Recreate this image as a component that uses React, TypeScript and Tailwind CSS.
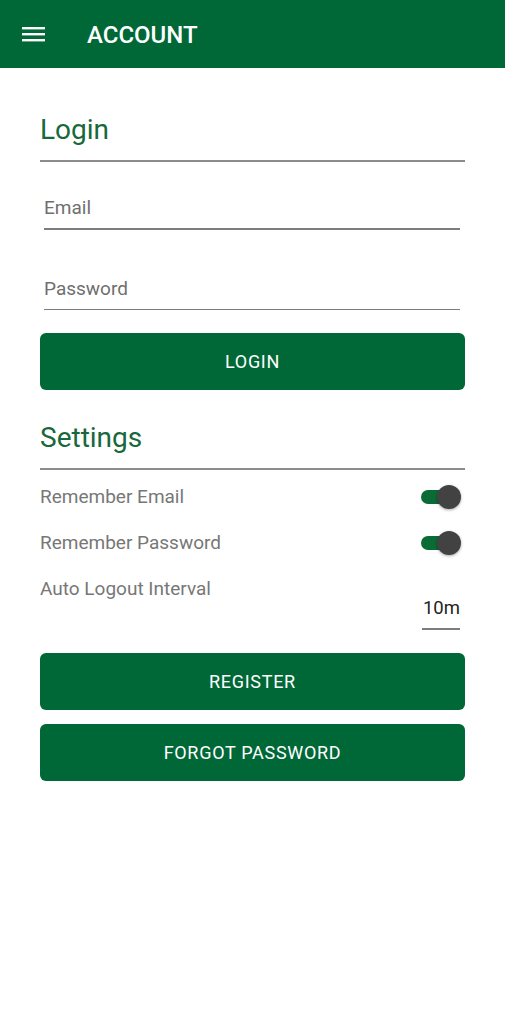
import React from "react";

function Toggle() {
  return (
    <div className="relative w-[40px] h-[24px] mr-[4px]">
      <div className="absolute left-0 top-[5px] w-[28px] h-[14px] rounded-full bg-[#0b6b35]" />
      <div className="absolute right-0 top-0 w-[24px] h-[24px] rounded-full bg-[#424242] shadow-[0_1px_3px_rgba(0,0,0,0.35)]" />
    </div>
  );
}

function Field({ label }: { label: string }) {
  return (
    <div className="ml-[4px] mr-[5px]">
      <div className="text-[19px] leading-[24px] text-[#6f6f6f]">{label}</div>
      <div className="mt-[8px] h-[1.5px] bg-[#7d7d7d]" />
    </div>
  );
}

function Button({ label }: { label: string }) {
  return (
    <button className="w-full h-[57px] rounded-[6px] bg-[#006837] text-white text-[18px] font-normal tracking-[0.7px] flex items-center justify-center">
      {label}
    </button>
  );
}

export default function App() {
  return (
    <div
      className="w-[505px] min-h-[1024px] bg-white"
      style={{ fontFamily: "Roboto, 'Noto Sans', sans-serif" }}
    >
      <header className="h-[68px] bg-[#006837] flex items-center">
        <svg className="ml-[22px]" width="23" height="15" viewBox="0 0 23 15">
          <rect x="0" y="0" width="23" height="2.4" fill="#fff" />
          <rect x="0" y="6" width="23" height="2.4" fill="#fff" />
          <rect x="0" y="12" width="23" height="2.4" fill="#fff" />
        </svg>
        <div className="ml-[42px] mt-[2px] text-white text-[24px] font-medium">ACCOUNT</div>
      </header>

      <main className="px-[40px] pt-[45px]">
        <h1 className="text-[28px] leading-[34px] text-[#17693c]">Login</h1>
        <div className="mt-[13px] h-[2px] bg-[#8c8c8c]" />

        <div className="mt-[34px]">
          <Field label="Email" />
        </div>
        <div className="mt-[47px]">
          <Field label="Password" />
        </div>

        <div className="mt-[23px]">
          <Button label="LOGIN" />
        </div>

        <h2 className="mt-[31px] text-[28px] leading-[34px] text-[#17693c]">Settings</h2>
        <div className="mt-[13px] h-[2px] bg-[#8c8c8c]" />

        <div className="mt-[4px]">
          <div className="h-[46px] flex items-center justify-between">
            <span className="text-[19px] leading-[46px] text-[#777777]">Remember Email</span>
            <Toggle />
          </div>
          <div className="h-[46px] flex items-center justify-between">
            <span className="text-[19px] leading-[46px] text-[#777777]">Remember Password</span>
            <Toggle />
          </div>
          <div className="flex items-start justify-between">
            <span className="text-[19px] leading-[46px] text-[#777777]">Auto Logout Interval</span>
            <div className="mt-[30px] mr-[5px] w-[38px]">
              <div className="text-[18.5px] leading-[24px] text-[#222222] text-right">10m</div>
              <div className="mt-[8px] h-[1.5px] bg-[#7d7d7d]" />
            </div>
          </div>
        </div>

        <div className="mt-[23px]">
          <Button label="REGISTER" />
        </div>
        <div className="mt-[14px]">
          <Button label="FORGOT PASSWORD" />
        </div>
      </main>
    </div>
  );
}
